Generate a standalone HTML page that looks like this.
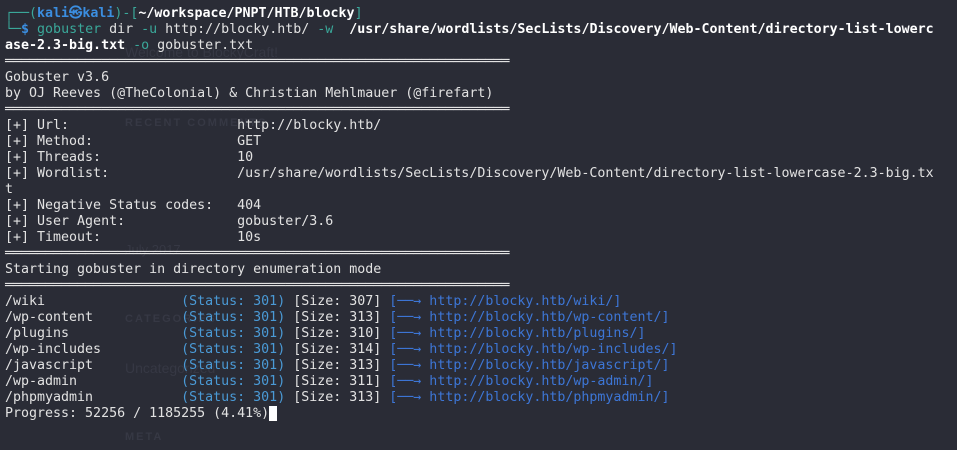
<!DOCTYPE html>
<html><head><meta charset="utf-8"><style>
html,body{margin:0;padding:0;background:#2a2c36;width:957px;height:450px;overflow:hidden}
pre{margin:0;position:absolute;left:5px;top:6px;font-family:"DejaVu Sans Mono","Liberation Mono",monospace;font-size:13.3px;line-height:16px;color:#e2e2e2;white-space:pre}
.g{color:#3aa89a}.b{color:#3b8ee0;font-weight:bold}.w{color:#fff;font-weight:bold}.c{color:#3aa89a}
.s{color:#4a9ad6}.l{color:#3d76d6}.cur{background:#fff;color:#fff}
.bg{position:absolute;font-family:"Liberation Sans",sans-serif;color:#363844}
</style></head><body>
<div class="bg" style="left:125px;top:44px;font-size:14px">Welcome to BlockyCraft!</div>
<div class="bg" style="left:125px;top:117px;font-size:11px;font-weight:bold;letter-spacing:2px">RECENT COMMENTS</div>
<div class="bg" style="left:125px;top:242px;font-size:13px">July 2017</div>
<div class="bg" style="left:125px;top:313px;font-size:11px;font-weight:bold;letter-spacing:2px">CATEGORIES</div>
<div class="bg" style="left:125px;top:360px;font-size:14px">Uncategorized</div>
<div class="bg" style="left:125px;top:431px;font-size:11px;font-weight:bold;letter-spacing:2px">META</div>
<pre><span class="g">┌──(</span><span class="b">kali㉿kali</span><span class="g">)-[</span><span class="w">~/workspace/PNPT/HTB/blocky</span><span class="g">]</span>
<span class="g">└─</span><span class="b">$</span> <span class="c">gobuster</span> dir <span class="c">-u</span> http://blocky.htb/ <span class="c">-w</span>  <span class="w">/usr/share/wordlists/SecLists/Discovery/Web-Content/directory-list-lowerc</span>
<span class="w">ase-2.3-big.txt</span> <span class="c">-o</span> gobuster.txt
═══════════════════════════════════════════════════════════════
Gobuster v3.6
by OJ Reeves (@TheColonial) &amp; Christian Mehlmauer (@firefart)
═══════════════════════════════════════════════════════════════
[+] Url:                     http://blocky.htb/
[+] Method:                  GET
[+] Threads:                 10
[+] Wordlist:                /usr/share/wordlists/SecLists/Discovery/Web-Content/directory-list-lowercase-2.3-big.tx
t
[+] Negative Status codes:   404
[+] User Agent:              gobuster/3.6
[+] Timeout:                 10s
═══════════════════════════════════════════════════════════════
Starting gobuster in directory enumeration mode
═══════════════════════════════════════════════════════════════
/wiki                 <span class="s">(Status: 301)</span> [Size: 307] <span class="l">[──→ http://blocky.htb/wiki/]</span>
/wp-content           <span class="s">(Status: 301)</span> [Size: 313] <span class="l">[──→ http://blocky.htb/wp-content/]</span>
/plugins              <span class="s">(Status: 301)</span> [Size: 310] <span class="l">[──→ http://blocky.htb/plugins/]</span>
/wp-includes          <span class="s">(Status: 301)</span> [Size: 314] <span class="l">[──→ http://blocky.htb/wp-includes/]</span>
/javascript           <span class="s">(Status: 301)</span> [Size: 313] <span class="l">[──→ http://blocky.htb/javascript/]</span>
/wp-admin             <span class="s">(Status: 301)</span> [Size: 311] <span class="l">[──→ http://blocky.htb/wp-admin/]</span>
/phpmyadmin           <span class="s">(Status: 301)</span> [Size: 313] <span class="l">[──→ http://blocky.htb/phpmyadmin/]</span>
Progress: 52256 / 1185255 (4.41%)<span class="cur"> </span></pre>
</body></html>
